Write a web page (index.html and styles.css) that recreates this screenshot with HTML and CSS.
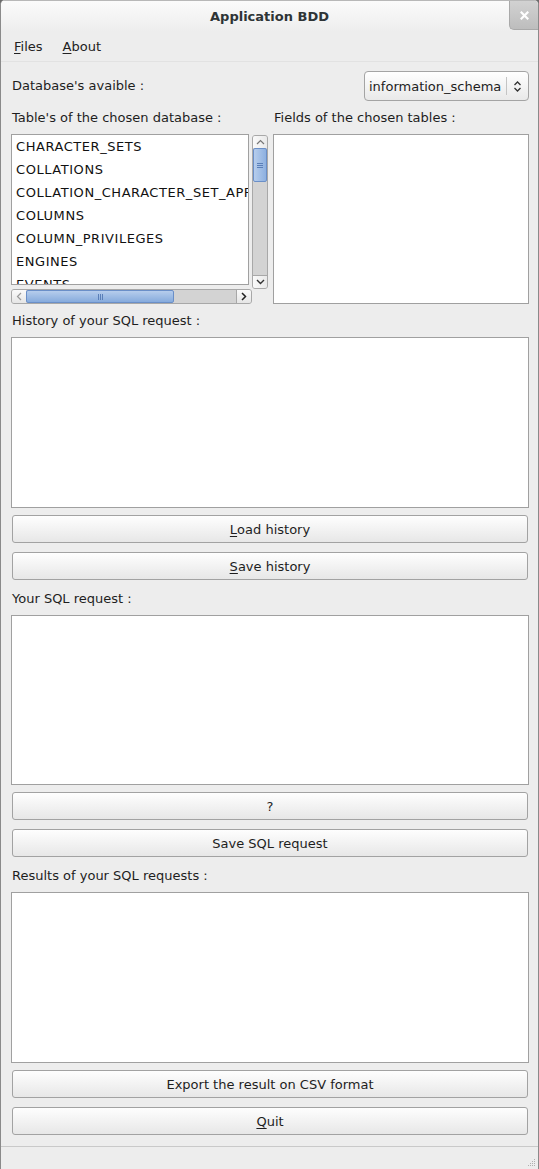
FILE: index.html
```html
<!DOCTYPE html>
<html>
<head>
<meta charset="utf-8">
<title>Application BDD</title>
<link rel="stylesheet" href="styles.css">
</head>
<body>
<div class="window">
  <div class="titlebar">
    <span class="title">Application BDD</span>
    <div class="close">
      <svg width="9" height="9" viewBox="0 0 9 9"><path d="M1.5 1.5 L7.5 7.5 M7.5 1.5 L1.5 7.5" stroke="#ffffff" stroke-width="2.2" stroke-linecap="square"/></svg>
    </div>
  </div>
  <div class="menubar">
    <span class="menu"><u>F</u>iles</span>
    <span class="menu"><u>A</u>bout</span>
  </div>
  <div class="content">
    <div class="db-row">
      <span class="label">Database's avaible :</span>
      <div class="combo">
        <span class="combo-text">information_schema</span>
        <span class="combo-sep"></span>
        <svg class="combo-icon" width="9" height="13" viewBox="0 0 9 13"><path d="M1.5 5 L4.5 2 L7.5 5 M1.5 8 L4.5 11 L7.5 8" fill="none" stroke="#333" stroke-width="1.3"/></svg>
      </div>
    </div>

    <div class="lists">
      <div class="col col-left">
        <div class="label lbl">Table's of the chosen database :</div>
        <div class="listgrid">
          <div class="list">
            <div class="item">CHARACTER_SETS</div>
            <div class="item">COLLATIONS</div>
            <div class="item">COLLATION_CHARACTER_SET_APPLICABILITY</div>
            <div class="item">COLUMNS</div>
            <div class="item">COLUMN_PRIVILEGES</div>
            <div class="item">ENGINES</div>
            <div class="item">EVENTS</div>
          </div>
          <div class="vscroll">
            <div class="arrow-v">
              <svg width="9" height="6" viewBox="0 0 9 6"><path d="M1 5 L4.5 1.5 L8 5" fill="none" stroke="#777" stroke-width="1.2"/></svg>
            </div>
            <div class="vthumb">
              <svg width="6" height="7" viewBox="0 0 6 7"><path d="M0 1.5 H6 M0 3.5 H6 M0 5.5 H6" stroke="#5a7fb8" stroke-width="1"/></svg>
            </div>
            <div class="vtrough"></div>
            <div class="arrow-v arrow-down">
              <svg width="9" height="6" viewBox="0 0 9 6"><path d="M1 1 L4.5 4.5 L8 1" fill="none" stroke="#333" stroke-width="1.4"/></svg>
            </div>
          </div>
          <div class="hscroll">
            <div class="arrow-h">
              <svg width="6" height="9" viewBox="0 0 6 9"><path d="M5 1 L1.5 4.5 L5 8" fill="none" stroke="#999" stroke-width="1.2"/></svg>
            </div>
            <div class="hthumb">
              <svg width="7" height="6" viewBox="0 0 7 6"><path d="M1.5 0 V6 M3.5 0 V6 M5.5 0 V6" stroke="#5a7fb8" stroke-width="1"/></svg>
            </div>
            <div class="htrough"></div>
            <div class="arrow-h arrow-right">
              <svg width="6" height="9" viewBox="0 0 6 9"><path d="M1 1 L4.5 4.5 L1 8" fill="none" stroke="#222" stroke-width="1.5"/></svg>
            </div>
          </div>
        </div>
      </div>
      <div class="col col-right">
        <div class="label lbl">Fields of the chosen tables :</div>
        <div class="box fields"></div>
      </div>
    </div>

    <div class="label section-label">History of your SQL request :</div>
    <div class="box textbox tall"></div>
    <div class="button"><u>L</u>oad history</div>
    <div class="button"><u>S</u>ave history</div>

    <div class="label section-label">Your SQL request :</div>
    <div class="box textbox"></div>
    <div class="button">?</div>
    <div class="button">Save SQL request</div>

    <div class="label section-label">Results of your SQL requests :</div>
    <div class="box textbox tall"></div>
    <div class="button">Export the result on CSV format</div>
    <div class="button"><u>Q</u>uit</div>
  </div>
  <div class="statusbar">
    <svg class="grip" width="10" height="10" viewBox="0 0 10 10">
      <g fill="#b0b0b0">
        <rect x="8" y="2" width="1" height="1"/>
        <rect x="6" y="4" width="1" height="1"/><rect x="8" y="4" width="1" height="1"/>
        <rect x="4" y="6" width="1" height="1"/><rect x="6" y="6" width="1" height="1"/><rect x="8" y="6" width="1" height="1"/>
        <rect x="2" y="8" width="1" height="1"/><rect x="4" y="8" width="1" height="1"/><rect x="6" y="8" width="1" height="1"/><rect x="8" y="8" width="1" height="1"/>
      </g>
    </svg>
  </div>
</div>
</body>
</html>
```

FILE: styles.css
```css
html, body {
  margin: 0;
  padding: 0;
  background: #6b6b6b;
}

body {
  font-family: "DejaVu Sans", "Liberation Sans", sans-serif;
  font-size: 13px;
  color: #1e1e1e;
}

u {
  text-decoration: underline;
  text-underline-offset: 2px;
}

.window {
  width: 539px;
  height: 1169px;
  box-sizing: border-box;
  background: #ededed;
  border-left: 1px solid #8a8a8a;
  border-right: 1px solid #8a8a8a;
  border-radius: 5px 5px 0 0;
  display: flex;
  flex-direction: column;
  overflow: hidden;
}

.titlebar {
  height: 32px;
  flex: none;
  display: flex;
  align-items: center;
  justify-content: center;
  position: relative;
  background: linear-gradient(#fbfbfb, #ededed);
  border-top: 1px solid #b8b8b8;
  box-sizing: border-box;
}

.title {
  font-weight: bold;
  color: #2e3436;
  font-size: 13px;
}

.close {
  position: absolute;
  right: 0;
  top: 0;
  width: 28px;
  height: 28px;
  background: linear-gradient(#d2d2d2, #bdbdbd);
  border-left: 1px solid #a9a9a9;
  border-bottom: 1px solid #a9a9a9;
  border-radius: 0 0 0 5px;
  display: flex;
  align-items: center;
  justify-content: center;
}

.menubar {
  height: 30px;
  flex: none;
  display: flex;
  align-items: center;
  gap: 20px;
  padding-left: 13px;
  border-bottom: 1px solid #e2e2e2;
  box-sizing: border-box;
  color: #222;
}

.content {
  flex: 1;
  padding: 9px 9px 0 10px;
  display: flex;
  flex-direction: column;
}

.label {
  line-height: 16px;
  height: 16px;
  white-space: nowrap;
}

.db-row {
  height: 30px;
  display: flex;
  align-items: center;
  justify-content: space-between;
  padding-left: 1px;
}

.combo {
  width: 165px;
  height: 30px;
  box-sizing: border-box;
  border: 1px solid #a4a4a4;
  border-radius: 4px;
  background: linear-gradient(#ffffff, #e9e9e9);
  display: flex;
  align-items: center;
  padding-left: 4px;
}

.combo-text {
  flex: 1;
  white-space: nowrap;
}

.combo-sep {
  width: 1px;
  height: 18px;
  background: #c4c4c4;
  margin-right: 6px;
}

.combo-icon {
  margin-right: 6px;
}

.lists {
  display: flex;
  gap: 5px;
  margin-top: 8px;
}

.col {
  display: flex;
  flex-direction: column;
}

.col-left {
  width: 257px;
}

.col-right {
  width: 256px;
}

.lbl {
  margin: 1px 0 8px 1px;
}

.listgrid {
  display: grid;
  grid-template-columns: 238px 3px 16px;
  grid-template-rows: 151px 4px 15px;
}

.list {
  grid-row: 1;
  grid-column: 1;
  background: #fff;
  border: 1px solid #a0a0a0;
  overflow: hidden;
  padding-left: 4px;
}

.item {
  height: 23px;
  line-height: 23px;
  white-space: nowrap;
  letter-spacing: 0.55px;
  color: #111;
}

.vscroll {
  grid-row: 1 / 3;
  grid-column: 3;
  margin: 1px 0 0 0;
  border: 1px solid #a8a8a8;
  border-radius: 3px;
  background: #d3d3d3;
  display: flex;
  flex-direction: column;
  overflow: hidden;
}

.arrow-v {
  height: 12px;
  flex: none;
  background: linear-gradient(90deg, #fafafa, #e9e9e9);
  display: flex;
  align-items: center;
  justify-content: center;
}

.arrow-down {
  border-top: 1px solid #a8a8a8;
}

.vthumb {
  height: 34px;
  flex: none;
  background: linear-gradient(90deg, #b6cdec, #8db0e0);
  border: 1px solid #6a8fc8;
  box-sizing: border-box;
  border-radius: 2px;
  display: flex;
  align-items: center;
  justify-content: center;
}

.vtrough {
  flex: 1;
}

.hscroll {
  grid-row: 3;
  grid-column: 1 / 3;
  border: 1px solid #a8a8a8;
  border-radius: 3px;
  background: #d3d3d3;
  display: flex;
  overflow: hidden;
}

.arrow-h {
  width: 14px;
  flex: none;
  background: linear-gradient(#fafafa, #e6e6e6);
  display: flex;
  align-items: center;
  justify-content: center;
}

.arrow-right {
  border-left: 1px solid #a8a8a8;
}

.hthumb {
  width: 148px;
  flex: none;
  background: linear-gradient(#b6cdec, #86abdd);
  border: 1px solid #6a8fc8;
  box-sizing: border-box;
  border-radius: 2px;
  display: flex;
  align-items: center;
  justify-content: center;
}

.htrough {
  flex: 1;
}

.box {
  background: #fff;
  border: 1px solid #a0a0a0;
  box-sizing: border-box;
}

.fields {
  height: 170px;
}

.section-label {
  margin: 9px 0 8px 1px;
}

.textbox {
  height: 170px;
}

.textbox.tall {
  height: 171px;
}

.button {
  height: 28px;
  box-sizing: border-box;
  margin: 7px 1px 0 1px;
  border: 1px solid #a2a2a2;
  border-radius: 3px;
  background: linear-gradient(#fefefe, #e7e7e7);
  display: flex;
  align-items: center;
  justify-content: center;
  color: #1e1e1e;
}

.button + .button {
  margin-top: 9px;
}

.button + .section-label {
  margin-top: 11px;
}

.statusbar {
  height: 23px;
  box-sizing: border-box;
  flex: none;
  border-top: 1px solid #c9c9c9;
  display: flex;
  justify-content: flex-end;
  align-items: flex-end;
  padding: 0 2px 2px 0;
}
```
